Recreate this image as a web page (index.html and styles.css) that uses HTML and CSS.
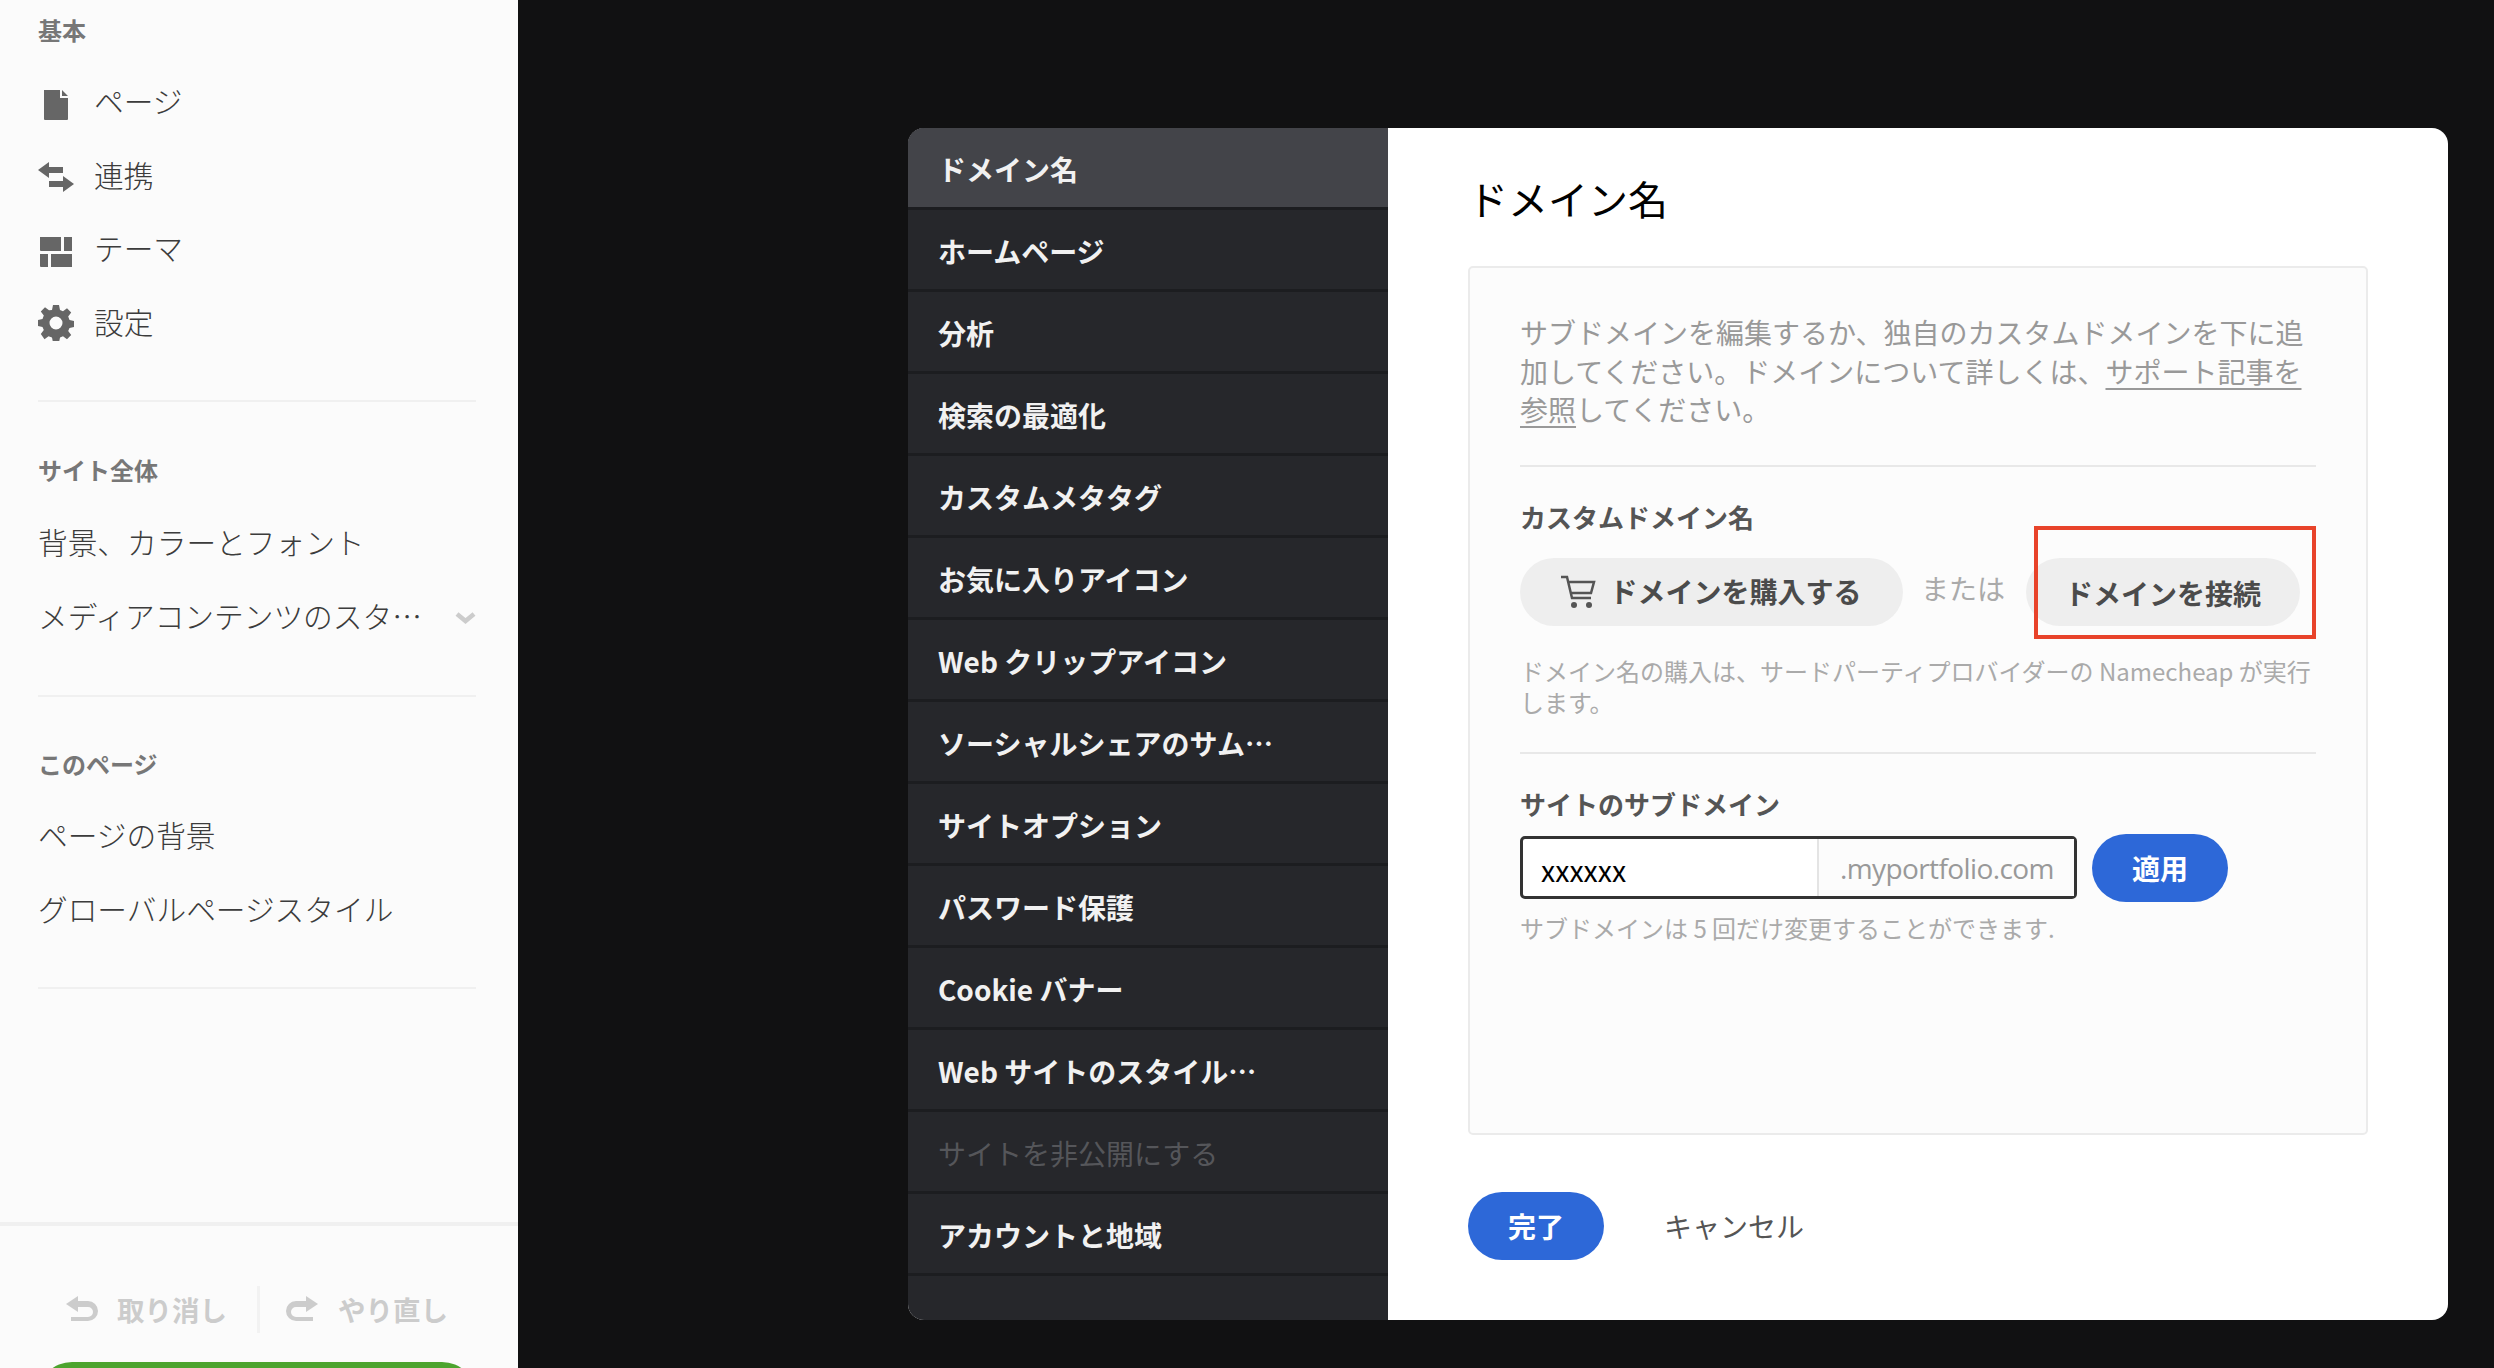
FILE: index.html
```html
<!doctype html>
<html lang="ja">
<head>
<meta charset="utf-8">
<meta name="viewport" content="width=device-width">
<title>ドメイン名</title>
<link rel="stylesheet" href="styles.css">
</head>
<body>
<aside class="side">
  <div class="side-body">
    <section class="group group-main">
      <h3>基本</h3>
      <a class="item"><svg class="ico ico-low" viewBox="0 0 36 30"><path d="M6 0h16v8h8v21a1 1 0 0 1-1 1H7a1 1 0 0 1-1-1zM24 0l6 6h-6z"/></svg>ページ</a>
      <a class="item"><svg class="ico" viewBox="0 0 36 30"><path d="M0 8L11 0v5h14v6H11v5zM36 22L25 14v5H11v6h14v5z"/></svg>連携</a>
      <a class="item"><svg class="ico ico-low" viewBox="0 0 36 30"><path d="M2 0h21v14H3a1 1 0 0 1-1-1zM26 0h8v14h-8zM2 17h8v13H3a1 1 0 0 1-1-1zM13 17h21v13H13z"/></svg>テーマ</a>
      <a class="item"><svg class="ico ico-gear" viewBox="0 0 36 36"><path fill-rule="evenodd" d="M15 0h6l1 5 3 1.300 4-3 4.200 4.200-3 4 1.300 3.500 5 1v6l-5 1-1.300 3 3 4-4.200 4.200-4-3-3 1.300-1 5h-6l-1-5-3.500-1.300-4 3L2.800 29l3-4-1.300-3-4.500-1v-6l4.500-1 1.300-3.500-3-4L7 2.300l4 3L14 5zM18 11.500a6.500 6.500 0 1 0 0 13 6.500 6.500 0 0 0 0-13z"/></svg>設定</a>
    </section>
    <section class="group group-site">
      <h3>サイト全体</h3>
      <a class="item">背景、カラーとフォント</a>
      <a class="item item-more">メディアコンテンツのスタ…<svg class="chev" viewBox="0 0 21 12"><path d="M2 2l8.500 7L19 2" fill="none" stroke="#ccc" stroke-width="4.500"/></svg></a>
    </section>
    <section class="group group-page">
      <h3>このページ</h3>
      <a class="item">ページの背景</a>
      <a class="item">グローバルページスタイル</a>
    </section>
  </div>
  <div class="side-foot">
    <div class="history">
      <span class="hist-btn"><svg viewBox="0 0 32 26" class="hist-ico"><path d="M0 8L12 0v5h10a9 9 0 0 1 0 20H5v-4h17a5 5 0 0 0 0-10H12v5z"/></svg>取り消し</span>
      <span class="hist-btn"><svg viewBox="0 0 32 26" class="hist-ico"><path d="M32 8L20 0v5H10a9 9 0 0 0 0 20h17v-4H10a5 5 0 0 1 0-10h10v5z"/></svg>やり直し</span>
    </div>
    <div class="publish"></div>
  </div>
</aside>

<main class="stage">
  <div class="dialog">
    <nav class="tabs">
      <a class="tab on">ドメイン名</a>
      <a class="tab">ホームページ</a>
      <a class="tab">分析</a>
      <a class="tab">検索の最適化</a>
      <a class="tab">カスタムメタタグ</a>
      <a class="tab">お気に入りアイコン</a>
      <a class="tab">Web クリップアイコン</a>
      <a class="tab">ソーシャルシェアのサム…</a>
      <a class="tab">サイトオプション</a>
      <a class="tab">パスワード保護</a>
      <a class="tab">Cookie バナー</a>
      <a class="tab">Web サイトのスタイル…</a>
      <a class="tab off">サイトを非公開にする</a>
      <a class="tab">アカウントと地域</a>
    </nav>
    <div class="panel">
      <h1>ドメイン名</h1>
      <div class="card">
        <p class="desc">サブドメインを編集するか、独自のカスタムドメインを下に追加してください。ドメインについて詳しくは、<u>サポート記事を</u><u>参照</u>してください。</p>
        <hr>
        <h4>カスタムドメイン名</h4>
        <div class="btn-row">
          <a class="pill pill-buy"><svg class="cart" viewBox="0 0 36 34"><path d="M1 2h6l5 21h19M9 7h25l-3 11H11" fill="none" stroke="#555" stroke-width="2.500"/><circle cx="14" cy="30" r="3" fill="#555"/><circle cx="29" cy="30" r="3" fill="#555"/></svg>ドメインを購入する</a>
          <span class="or">または</span>
          <a class="pill pill-connect">ドメインを接続<i class="mark"></i></a>
        </div>
        <p class="help">ドメイン名の購入は、サードパーティプロバイダーの Namecheap が実行します。</p>
        <hr class="hr2">
        <h4 class="h-sub">サイトのサブドメイン</h4>
        <div class="sub-row">
          <div class="field"><span class="field-val">xxxxxx</span><span class="field-suffix">.myportfolio.com</span></div>
          <a class="blue blue-apply">適用</a>
        </div>
        <p class="help help-sub">サブドメインは 5 回だけ変更することができます.</p>
      </div>
      <div class="actions">
        <a class="blue">完了</a>
        <a class="cancel">キャンセル</a>
      </div>
    </div>
  </div>
</main>
</body>
</html>
```
FILE: styles.css
```css
html,body{margin:0; height:100%; overflow:hidden}
body{display:flex; height:1368px; background:#111112; font-family:"Noto Sans CJK JP","Noto Sans",sans-serif; color:#333}
a{display:block}

/* left rail */
.side{width:518px; height:1368px; flex:none; display:flex; flex-direction:column; background:#fbfbfb}
.side-body{flex:1; min-height:0; padding:18px 42px 0 38px}
.group{padding-bottom:40px; margin-bottom:56px; border-bottom:2px solid #f0f0f0}
.group h3{margin:0 0 22px; font-size:24px; line-height:24px; font-weight:700; color:#777}
.group-main{padding-bottom:42px}
.group-main .item{height:73.500px}
.group-site{padding-bottom:43px; margin-bottom:54.500px}
.group-page{padding-bottom:41.500px}
.item{display:flex; align-items:center; height:74px; font-size:29.700px; font-weight:300; color:#3c3c3c; white-space:nowrap}
.ico{width:36px; height:30px; margin:5px 20px 0 0; fill:#666}
.ico-low{margin-top:8px}
.ico-gear{height:36px; margin-top:3px}
.item-more{justify-content:space-between}
.chev{width:21px; height:12px; margin-top:5px}
.side-foot{height:146px; flex:none; overflow:hidden; border-top:4px solid #f0f0f0; box-sizing:border-box}
.history{display:flex; margin:59.500px 0 29.500px; padding-left:38px; height:47px}
.hist-btn{display:flex; align-items:center; gap:19px; padding:0 30px 0 28px; font-size:27.500px; font-weight:700; color:#ccc}
.hist-btn:first-child{border-right:3px solid #f2f2f2}
.hist-btn + .hist-btn{padding-left:26px; gap:20px}
.hist-ico{width:32px; height:26px; fill:#ccc}
.publish{height:68px; margin:0 42px 0 38px; border-radius:34px; background:#4ca42e}

/* dialog */
.stage{flex:1; padding:128px 46px 48px 390px; min-width:0}
.dialog{display:flex; height:1192px; border-radius:16px; overflow:hidden; background:#fff}
.tabs{width:480px; flex:none; background:#26272b}
.tab{height:76.500px; padding-top:2.500px; line-height:76.500px; padding-left:30px; border-bottom:3px solid #1c1d20; font-size:28px; font-weight:700; color:#f1f1f1; white-space:nowrap}
.tab.on{background:#434449}
.tab.off{font-weight:400; color:#55565a}

.panel{flex:1; display:flex; flex-direction:column; padding:41.500px 80px 60px 80px}
.panel h1{margin:0 0 40.500px; font-size:40px; line-height:56px; font-weight:400; color:#000}
.card{flex:1; min-height:0; box-sizing:border-box; padding:45px 50px 0 50px; border:2px solid #ebebeb; border-radius:5px; background:#fcfcfc}
.desc{margin:0 0 36px; font-size:28px; line-height:38.500px; color:#999}
.desc u{text-underline-offset:5px}
hr{margin:0 0 32px; height:2px; border:0; background:#e8e8e8}
.hr2{margin:35px 0 32px}
h4{margin:0 0 23px; font-size:26px; line-height:36px; font-weight:700; color:#555}
.h-sub{margin-bottom:12px}
.btn-row{display:flex; align-items:center; height:68px}
.pill{position:relative; display:flex; align-items:center; height:68px; border-radius:34px; background:#eee; font-size:28px; font-weight:700; color:#4b4b4b; white-space:nowrap}
.pill-buy{width:383px; box-sizing:border-box; padding:0 0 2px 40px}
.cart{width:36px; height:34px; margin:2px 13.500px 0 0}
.or{margin:0 21px 7px 18px; font-size:28px; color:#aaa}
.pill-connect{width:274px; box-sizing:border-box; padding:2px 0 0 39px}
/* red annotation box round the connect button */
.mark{position:absolute; left:8px; right:-16px; top:-32px; bottom:-13px; border:4px solid #e8432a}
.help{margin:29px 0 0; font-size:24px; line-height:31px; color:#aaa}
.sub-row{display:flex; align-items:center; gap:15px; height:68px}
.field{display:flex; width:557px; height:63px; box-sizing:border-box; border:3px solid #333; border-radius:5px; background:#fff}
.field-val{width:296px; box-sizing:border-box; padding:6px 0 0 18px; border-right:2px solid #e4e4e4; font-size:28.500px; line-height:50px; color:#000}
.field-suffix{flex:1; padding:4px 0 0 21px; background:#fcfcfc; font-family:"Open Sans",sans-serif; font-size:28px; line-height:50px; letter-spacing:-.6px; color:#999}
.blue{display:flex; align-items:center; justify-content:center; width:136px; height:68px; border-radius:34px; background:#2d68d8; font-size:28px; font-weight:700; color:#fff}
.help-sub{margin-top:10px}
.actions{display:flex; align-items:center; margin-top:57px}
.cancel{margin-left:60px; font-size:28px; color:#555}
```
